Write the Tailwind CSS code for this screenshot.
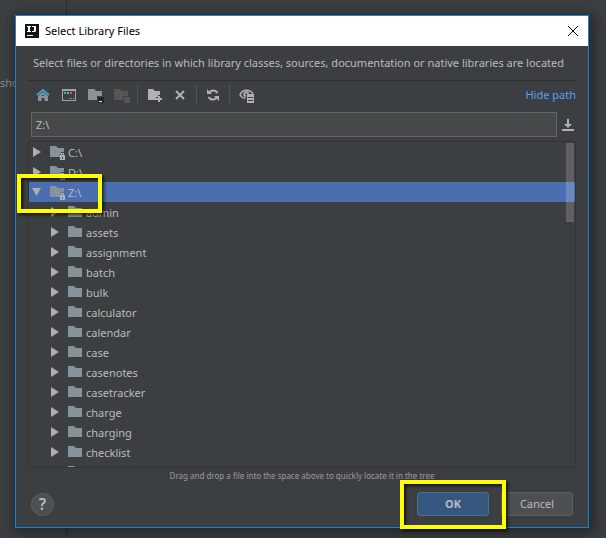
<!DOCTYPE html>
<html lang="en">
<head>
<meta charset="utf-8">
<title>Select Library Files</title>
<script src="https://cdn.jsdelivr.net/npm/@tailwindcss/browser@4"></script>
</head>
<body class="relative h-screen overflow-hidden bg-[#3c3f41] font-['Noto_Sans','Open_Sans',sans-serif] text-[11px] text-[#bbbbbb]">
<svg class="hidden">
  <symbol id="folder" viewBox="0 0 14 12"><path fill="#87939a" d="M0 0h6l2 2h6v9H0z"/></symbol>
  <symbol id="drive" viewBox="0 0 16 14"><path fill="#87939a" d="M0 0h6l2 2h6v4h-3v2h-1v3H0z"/><path fill="#afb1b3" fill-rule="evenodd" d="M11 7h3v2h1v5h-5V9h1zM12 8v1h1V8zM12 11v2h1v-2z"/></symbol>
  <symbol id="closed" viewBox="0 0 10 10"><path fill="#adadad" d="M1 0v10l8-5z"/></symbol>
  <symbol id="open" viewBox="0 0 10 10"><path fill="#adadad" d="M0 1h9L4.500 9z"/></symbol>
</svg>

<div class="absolute inset-y-0 left-[66px] w-px bg-[#2b2d2e]"></div>
<div class="absolute top-[75px] left-0 leading-4 text-[#8c8c8c]">sho</div>

<div class="flex h-full pt-[15px] pr-[17px] pb-[10px] pl-[15px]">
<main role="dialog" aria-labelledby="title" class="relative flex min-w-0 flex-1 flex-col border border-[#1883d7] bg-[#3c3f41] shadow-[2px_3px_12px_3px_rgba(0,0,0,0.4)]">
  <header class="flex h-[30px] shrink-0 items-center bg-white pr-[9px] pl-[9px] text-black">
    <svg class="size-[14px]" viewBox="0 0 14 14"><path fill="#141414" d="M0 0h14v14H0z"/><path fill="#fff" d="M2 2h4v1H5v4h1v1H2V7h1V3H2zM7 2h4v5l-1 1H7V7h2V3H7zM2 11h6v1H2z"/></svg>
    <h1 id="title" class="ml-[6px] flex-1">Select Library Files</h1>
    <button aria-label="Close"><svg class="size-[12px]" viewBox="0 0 12 12"><path stroke="#000" d="M1 1l10 10M11 1L1 11"/></svg></button>
  </header>

  <p class="mx-3 flex h-[35px] shrink-0 items-center whitespace-nowrap border-b border-[#2d2f30] pl-[5px]">Select files or directories in which library classes, sources, documentation or native libraries are located</p>

  <div class="mr-3 ml-[15px] flex h-[28px] shrink-0 items-center">
    <div class="flex flex-1 items-center">
      <button aria-label="Home" class="ml-[5px]"><svg class="size-[14px]" viewBox="0 0 14 14"><path fill="#87939a" fill-rule="evenodd" d="M7 4l5 4v5H8.500v-3h-3v3H2V8zM6 7v1h2V7z"/><path fill="none" stroke="#40a0c5" stroke-width="2" d="M1 7l6-5 6 5"/></svg></button>
      <button aria-label="Project directory" class="ml-3"><svg class="h-[12px] w-[14px]" viewBox="0 0 14 12"><path fill="#9aa7b0" fill-rule="evenodd" d="M0 0h14v12H0zM1 2v9h12V2z"/><path fill="#9aa7b0" d="M7 9h1v1H7zM9 9h1v1H9zM11 9h1v1h-1z"/><path fill="#62b543" d="M2 3h2v2H2z"/><path fill="#40b6e0" d="M5 3h2v2H5z"/><path fill="#e0622f" d="M8 3h2v2H8z"/></svg></button>
      <button aria-label="Module directory" class="ml-3"><svg class="mt-px h-[14px] w-[16px]" viewBox="0 0 16 14"><path fill="#87939a" d="M0 0h6l2 2h6v5H9v4H0z"/><path fill="#222" d="M10 8h6v6h-6z"/><path fill="#eee" d="M11 12h3v1h-3z"/></svg></button>
      <button aria-label="Module content" disabled class="ml-[10px]"><svg class="mt-px h-[14px] w-[16px]" viewBox="0 0 16 14"><path fill="#555755" d="M0 0h6l2 2h6v5H9v4H0zM10 8h6v6h-6z"/></svg></button>
      <span class="ml-[7px] h-5 w-px bg-[#515355]"></span>
      <button aria-label="New folder" class="ml-[10px]"><svg class="mt-px h-[13px] w-[15px]" viewBox="0 0 15 13"><path fill="#afb1b3" d="M0 0h5l2 2h5v4h-2v2H8v3H0zM10 7h2v2h2v2h-2v2h-2v-2H8V9h2z"/></svg></button>
      <button aria-label="Delete" class="ml-3"><svg class="size-[10px]" viewBox="0 0 10 10"><path stroke="#afb1b3" stroke-width="2" d="M1 1l8 8M9 1L1 9"/></svg></button>
      <span class="ml-[11px] h-5 w-px bg-[#515355]"></span>
      <button aria-label="Refresh" class="ml-[10px]"><svg class="size-[12px]" viewBox="0 0 12 12"><path fill="none" stroke="#afb1b3" stroke-width="2" d="M2 4.500C3.500.5 8.500.5 10.500 4M10 7.500C8.500 11.500 3.500 11.500 1.500 8"/><path fill="#afb1b3" d="M0 0v5h5zM12 12V7H7z"/></svg></button>
      <span class="ml-[10px] h-5 w-px bg-[#515355]"></span>
      <button aria-label="Show hidden files" class="ml-[9px]"><svg class="mt-px h-[14px] w-[16px]" viewBox="0 0 16 14"><path fill="none" stroke="#afb1b3" stroke-width="1.500" d="M6 9.500C3.500 9 2 7.500 1 5.500 4 0 11 0 14 5"/><path fill="none" stroke="#afb1b3" stroke-width="2" d="M7 7.500A2.200 2.200 0 1 1 9.500 4.500"/><path fill="#afb1b3" fill-rule="evenodd" d="M8 5h7v9H8zM9 8v1h5V8zM9 11v1h5v-1z"/></svg></button>
    </div>
    <a href="#" class="text-[#589df6]">Hide path</a>
  </div>

  <div class="mt-[3px] mr-[14px] ml-[15px] flex shrink-0 items-center">
    <input aria-label="Path" value="Z:\" class="h-[25px] min-w-0 flex-1 border border-[#646464] bg-[#45494a] px-1 outline-none">
    <button aria-label="Recent paths" class="ml-[5px]"><svg class="size-[12px]" viewBox="0 0 12 12"><path fill="#afb1b3" d="M5 0h2v5h3L6 9 2 5h3zM0 10h12v2H0z"/></svg></button>
  </div>

  <section class="relative mx-3 mt-1 min-h-0 flex-1 overflow-hidden border border-[#323435]">
    <ul id="tree" role="tree" aria-label="Files"></ul>
    <div class="absolute top-px right-px h-[79px] w-2 bg-white/18"></div>
  </section>
  <p class="shrink-0 text-center text-[8px] leading-4 text-[#9a9a9a]">Drag and drop a file into the space above to quickly locate it in the tree</p>

  <footer class="flex shrink-0 items-center px-[15px] pt-2 pb-[11px]">
    <button aria-label="Help" class="flex size-[23px] items-center justify-center rounded-full border border-[#5e6060] bg-[#4c5052] text-base font-semibold">?</button>
    <span class="flex-1"></span>
    <button class="h-6 w-[72px] rounded-[3px] border border-[#4c708c] bg-[#365880] font-bold">OK</button>
    <button class="ml-3 h-6 w-[72px] rounded-[3px] border border-[#5e6060] bg-[#4c5052]">Cancel</button>
  </footer>
</main>
</div>

<div class="pointer-events-none absolute top-[174px] left-[17px] h-[39px] w-[85px] border-4 border-[#ffff00] shadow-[2px_2px_3px_rgba(0,0,0,0.7),inset_2px_2px_3px_rgba(0,0,0,0.7)]"></div>
<div class="pointer-events-none absolute right-[100px] bottom-[9px] h-[49px] w-[106px] border-4 border-[#ffff00] shadow-[2px_2px_3px_rgba(0,0,0,0.7),inset_2px_2px_3px_rgba(0,0,0,0.7)]"></div>

<script>
const drives = ['C:\\', 'D:\\', 'Z:\\'];
const folders = ['admin', 'assets', 'assignment', 'batch', 'bulk', 'calculator', 'calendar', 'case', 'casenotes', 'casetracker', 'charge', 'charging', 'checklist'];
const driveRow = n => `<li role="treeitem" class="flex h-5 items-center pl-[3px] ${n === 'Z:\\' ? 'bg-[#4b6eaf]' : ''}"><svg class="size-[10px]"><use href="#${n === 'Z:\\' ? 'open' : 'closed'}"/></svg><svg class="mt-0.5 ml-2 h-[14px] w-4"><use href="#drive"/></svg><span class="ml-[2px] pt-0.5">${n}</span></li>`;
const folderRow = n => `<li role="treeitem" class="flex h-5 items-center pl-[21px]"><svg class="size-[10px]"><use href="#closed"/></svg><svg class="ml-2 h-[12px] w-[14px]"><use href="#folder"/></svg><span class="ml-1 pt-0.5">${n}</span></li>`;
const nextRow = `<li aria-hidden="true" class="flex h-5 items-center pl-[39px]"><svg class="h-[12px] w-[14px]"><use href="#folder"/></svg></li>`;
document.getElementById('tree').innerHTML = drives.map(driveRow).join('') + folders.map(folderRow).join('') + nextRow;
</script>
</body>
</html>
